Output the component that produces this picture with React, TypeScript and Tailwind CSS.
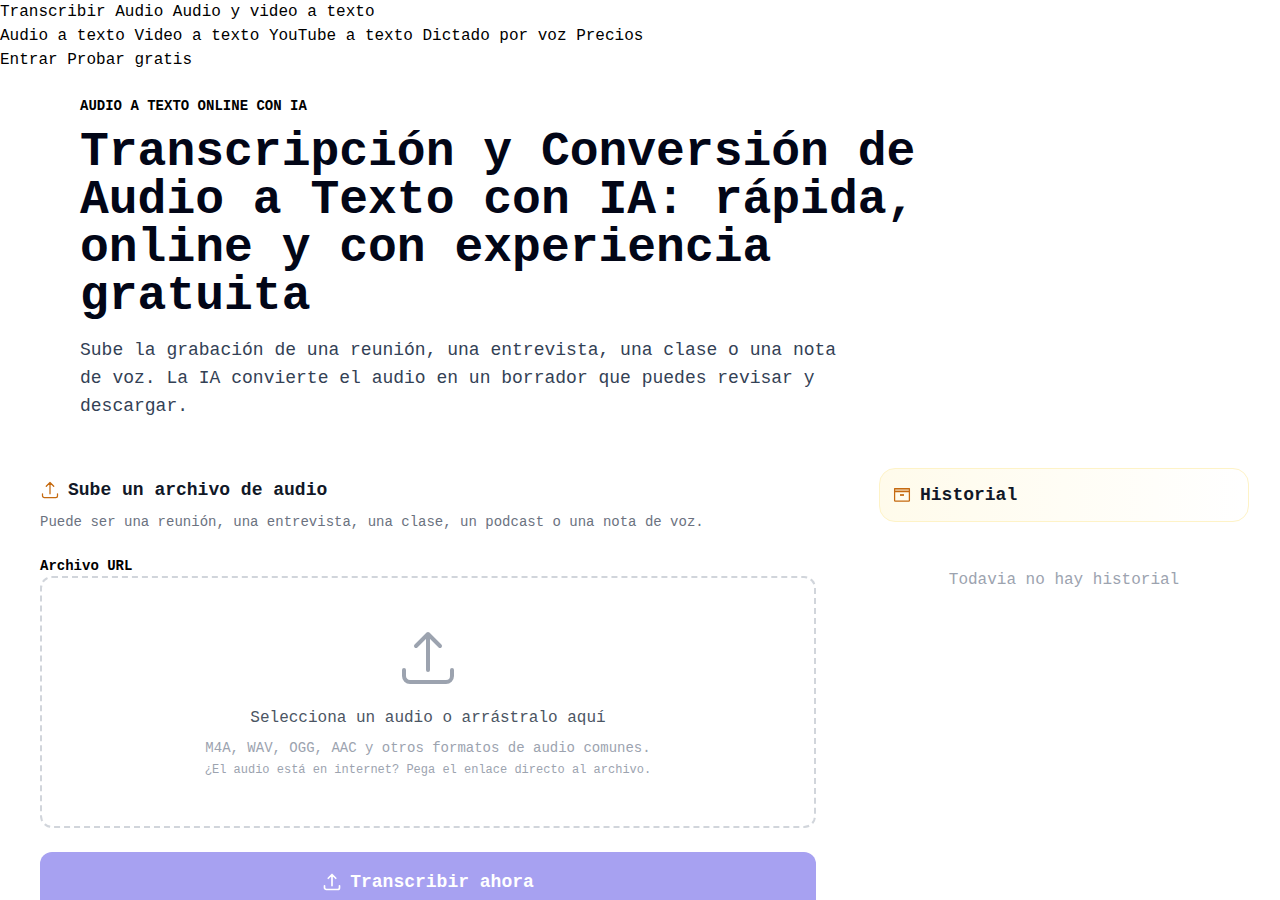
import React from 'react';

interface IconProps {
  className?: string;
}

const UploadIcon: React.FC<IconProps> = ({ className }) => (
  <svg className={className} viewBox="0 0 24 24" fill="none" stroke="currentColor" strokeLinecap="round" strokeLinejoin="round" aria-hidden="true">
    <path d="M3 16.5v2.25A2.25 2.25 0 0 0 5.25 21h13.5A2.25 2.25 0 0 0 21 18.75V16.5m-13.5-9L12 3m0 0 4.5 4.5M12 3v13.5" />
  </svg>
);

const HistoryIcon: React.FC<IconProps> = ({ className }) => (
  <svg className={className} viewBox="0 0 20 20" fill="none" stroke="currentColor" strokeWidth={1.25} strokeLinejoin="round" aria-hidden="true">
    <path d="M2.6 3.6h14.8v3H2.6z" fill="currentColor" fillOpacity={0.45} />
    <path d="M2.6 6.6v9a.6.6 0 0 0 .6.6h13.6a.6.6 0 0 0 .6-.6v-9" />
    <path d="M8 10h4" strokeWidth={1.75} />
  </svg>
);

const NAV_LINKS = ['Audio a texto', 'Video a texto', 'YouTube a texto', 'Dictado por voz', 'Precios'];

const Header = () => (
  <header>
    <div>
      <a href="#">Transcribir Audio</a> <span>Audio y video a texto</span>
    </div>
    <nav>
      {NAV_LINKS.map((label) => (
        <React.Fragment key={label}>
          <a href="#">{label}</a>{' '}
        </React.Fragment>
      ))}
    </nav>
    <div>
      <a href="#">Entrar</a> <a href="#">Probar gratis</a>
    </div>
  </header>
);

const Hero = () => (
  <section className="mx-auto max-w-6xl px-4 pt-6 pb-12">
    <p className="text-sm font-bold uppercase">Audio a texto online con IA</p>
    <h1 className="mt-3 max-w-4xl text-5xl leading-none font-bold text-[#020617]">
      Transcripción y Conversión de Audio a Texto con IA: rápida, online y con experiencia gratuita
    </h1>
    <p className="mt-4 max-w-3xl text-lg leading-7 text-[#334155]">
      Sube la grabación de una reunión, una entrevista, una clase o una nota de voz. La IA convierte el audio en un borrador que puedes revisar y descargar.
    </p>
  </section>
);

const Uploader = () => (
  <section className="pt-2">
    <h2 className="flex items-center gap-2 text-lg leading-7 font-bold text-[#111827]">
      <UploadIcon className="size-5 stroke-[1.5] text-[#c56a10]" />
      Sube un archivo de audio
    </h2>
    <p className="mt-2 text-sm text-[#6b7280]">
      Puede ser una reunión, una entrevista, una clase, un podcast o una nota de voz.
    </p>
    <div className="mt-6 text-sm font-bold">
      <button type="button">Archivo</button> <button type="button">URL</button>
    </div>
    <label className="flex cursor-pointer flex-col items-center rounded-xl border-2 border-dashed border-[#d1d5db] p-12 text-center">
      <input type="file" accept="audio/*" className="sr-only" />
      <UploadIcon className="size-16 stroke-[1.5] text-[#9ca3af]" />
      <span className="mt-4 text-base text-[#4b5563]">Selecciona un audio o arrástralo aquí</span>
      <span className="mt-2 text-sm text-[#9ca3af]">M4A, WAV, OGG, AAC y otros formatos de audio comunes.</span>
      <span className="mt-1 text-xs text-[#9ca3af]">¿El audio está en internet? Pega el enlace directo al archivo.</span>
    </label>
    <button
      type="button"
      className="mt-6 flex w-full items-center justify-center gap-2 rounded-xl bg-[#a7a1f1] px-6 py-4 text-lg leading-7 font-bold text-white"
    >
      <UploadIcon className="size-5 stroke-2" />
      Transcribir ahora
    </button>
  </section>
);

const History = () => (
  <aside>
    <div className="flex items-center gap-2 rounded-2xl border border-[#fef3c7] bg-linear-to-r from-[#fffbeb] to-white px-3 py-3">
      <HistoryIcon className="size-5 text-[#c56a10]" />
      <h2 className="text-lg leading-7 font-bold text-[#111827]">Historial</h2>
    </div>
    <p className="pt-[46px] pb-12 text-center text-base text-[#9ca3af]">Todavia no hay historial</p>
  </aside>
);

const App = () => (
  <div className="min-h-screen bg-white font-['Liberation_Mono',monospace] text-base text-black">
    <Header />
    <main>
      <Hero />
      <div className="mx-auto grid max-w-7xl grid-cols-[776fr_370fr] items-start gap-[63px] pr-[31px] pb-8 pl-10">
        <Uploader />
        <History />
      </div>
    </main>
  </div>
);

export default App;
